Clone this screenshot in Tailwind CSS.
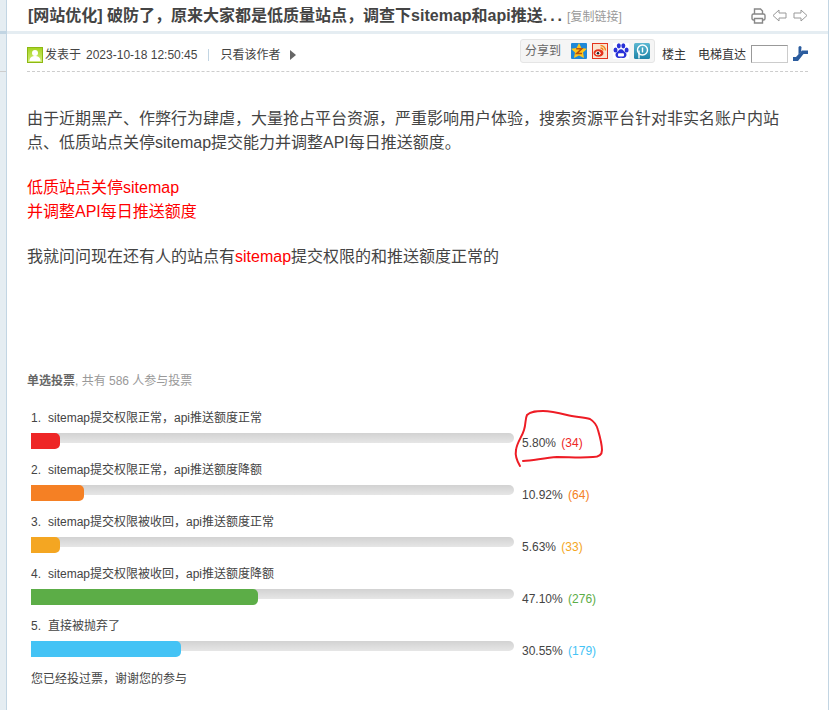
<!DOCTYPE html>
<html lang="zh">
<head>
<meta charset="UTF-8">
<title>帖子</title>
<script src="https://cdn.jsdelivr.net/npm/@tailwindcss/browser@4"></script>
</head>
<body class="bg-white font-['Liberation_Sans','Noto_Sans_CJK_SC',sans-serif] text-[#444] text-xs">
<div class="relative flex w-[832px] h-[710px] overflow-hidden">
  <!-- left strip, keeps the header band and dashed rule running through it -->
  <div class="w-[7px] shrink-0 bg-[#E5EDF2] border-r border-[#C2D5E3]">
    <div class="mt-[31px] h-[3px] bg-[#C2D5E3]"></div>
    <div class="mt-[37px] border-t border-dashed border-[#CDCDCD]"></div>
  </div>

  <main class="w-[822px] shrink-0 border-r border-[#C2D5E3]">
    <!-- title row -->
    <div class="flex items-center h-[31px] pl-[21px] pr-[20px] border-b-[3px] border-[#E5EDF2] box-content">
      <h1 class="text-base font-bold text-[#444] whitespace-nowrap">[网站优化] 破防了，原来大家都是低质量站点，调查下sitemap和api推送<span class="tracking-[3px]">...</span></h1>
      <span class="ml-[2px] mt-[3px] text-xs text-[#999] whitespace-nowrap">[复制链接]</span>
      <div class="ml-auto flex items-center gap-[6px]">
        <svg width="15" height="16" viewBox="0 0 15 16" fill="none" stroke="#888" stroke-width="1.4"><path d="M3.500 6V1h6l2 2v3"/><rect x="1" y="6" width="13" height="6" rx="1.500"/><path d="M3.500 10.500h8V15h-8z" fill="#fff"/></svg>
        <svg width="15" height="13" viewBox="0 0 15 13" fill="#fff" stroke="#999"><path d="M7 1 1 6.500 7 12V9h7V4H7z"/></svg>
        <svg width="15" height="13" viewBox="0 0 15 13" fill="#fff" stroke="#999"><path d="M8 1l6 5.500L8 12V9H1V4h7z"/></svg>
      </div>
    </div>

    <!-- author bar -->
    <div class="flex items-center h-[37px] ml-[20px] mr-[20px] border-b border-dashed border-[#CDCDCD] box-content">
      <svg width="16" height="16" viewBox="0 0 16 16" class="mt-[5px]">
        <defs><linearGradient id="avatarBg" x1="0" y1="0" x2="0" y2="1"><stop offset="0" stop-color="#A4D31E"/><stop offset="1" stop-color="#D4EE7C"/></linearGradient></defs>
        <rect x=".5" y=".5" width="15" height="15" fill="url(#avatarBg)" stroke="#8DB814"/><circle cx="8" cy="6" r="3" fill="#fff"/><path d="M2.500 14c0-4 3-5 5.500-5s5.500 1 5.500 5z" fill="#fff"/>
      </svg>
      <span class="ml-[2px] mt-[5px]">发表于</span>
      <span class="ml-[5px] mt-[5px] text-[#444]">2023-10-18 12:50:45</span>
      <span class="ml-[11px] mt-[5px] h-[12px] border-l border-[#C2D5E3]"></span>
      <span class="ml-[11px] mt-[5px]">只看该作者</span>
      <span class="ml-[10px] mt-[5px] w-0 h-0 border-y-[5px] border-y-transparent border-l-[6px] border-l-[#666]"></span>

      <div class="ml-auto flex items-center h-[24px] w-[135px] pl-[4px] bg-[#F5F5F5] border border-[#E5E5E5] rounded-[3px] -mt-[4px]">
        <span class="w-[46px] text-[#666]">分享到</span>
        <div class="flex gap-[5px]">
          <svg width="16" height="16" viewBox="0 0 16 16"><rect width="16" height="16" rx="1" fill="#1E88D8"/><path d="M8 0l2.400 5 5.600.7-4 3.900 1 5.400L8 12.400 3 15l1-5.400-4-3.900L5.600 5z" fill="#FFC61A"/><path d="M5.200 5.800h5.600L5.600 10.600h5.400" fill="none" stroke="#B5520C" stroke-width="1.500"/></svg>
          <svg width="16" height="16" viewBox="0 0 16 16"><rect x=".5" y=".5" width="15" height="15" fill="#FBE3CF" stroke="#E4331C"/><ellipse cx="6.500" cy="10" rx="5" ry="3.800" fill="#E4331C"/><ellipse cx="6" cy="10.300" rx="2.600" ry="2" fill="#fff"/><circle cx="6" cy="10.300" r="1.300" fill="#222"/><path d="M8.500 2.500a5 5 0 0 1 5 5M8.500 5a2.500 2.500 0 0 1 2.500 2.500" fill="none" stroke="#F08A1D" stroke-width="1.400"/></svg>
          <svg width="16" height="16" viewBox="0 0 16 16"><rect width="16" height="16" fill="#fff"/><g fill="#2A32D8"><ellipse cx="2.500" cy="7" rx="2" ry="2.500"/><ellipse cx="5.800" cy="2.800" rx="2" ry="2.600"/><ellipse cx="10.300" cy="2.800" rx="2" ry="2.600"/><ellipse cx="13.600" cy="7" rx="2" ry="2.500"/><path d="M8 6.200c2.200 0 2.800 2 4.300 3.100 2.200 1.700 1.200 5.700-1.700 5.700-1 0-1.600-.3-2.600-.3s-1.600.3-2.600.3c-2.900 0-3.900-4-1.700-5.700C5.200 8.200 5.800 6.200 8 6.200z"/></g><rect x="5" y="10.300" width="6" height="3.200" rx="1" fill="#fff"/></svg>
          <svg width="16" height="16" viewBox="0 0 16 16"><defs><linearGradient id="pinBg" x1="0" y1="0" x2="0" y2="1"><stop offset="0" stop-color="#5CB8D2"/><stop offset="1" stop-color="#1E84A8"/></linearGradient></defs><rect width="16" height="16" rx="1.500" fill="url(#pinBg)"/><circle cx="8.500" cy="7" r="5" fill="none" stroke="#fff" stroke-width="1.400"/><path d="M5 15.500V7.500M8.500 4.500v5" stroke="#fff" stroke-width="1.400" fill="none"/></svg>
        </div>
      </div>
      <span class="ml-[7px] mt-[5px] text-[#333]">楼主</span>
      <span class="ml-[12px] mt-[5px] text-[#333]">电梯直达</span>
      <span class="ml-[5px] mt-[3px] w-[37px] h-[18px] bg-white border border-[#CCC] border-t-[#999] border-l-[#999]"></span>
      <svg width="15" height="15" viewBox="0 0 15 15" class="ml-[5px] mt-[1px]" fill="#2B5C9E"><path d="M0 11h3l6-6.500h6V8h-4.500L5 15H0z"/><path d="M5.500 1.500a1.500 1.500 0 0 1 3 0L8 6 5.500 8.500z"/></svg>
    </div>

    <!-- post body -->
    <div class="ml-[20px] pt-[35px] w-[760px] text-base leading-[24px] text-[#444]">
      <p>由于近期黑产、作弊行为肆虐，大量抢占平台资源，严重影响用户体验，搜索资源平台针对非实名账户内站点、低质站点关停sitemap提交能力并调整API每日推送额度。</p>
      <p class="mt-[21px] text-[#F00]">低质站点关停sitemap<br>并调整API每日推送额度</p>
      <p class="mt-[21px]">我就问问现在还有人的站点有<span class="text-[#F00]">sitemap</span>提交权限的和推送额度正常的</p>
    </div>

    <!-- poll -->
    <div class="ml-[20px] mt-[103px]">
      <p class="h-[18px] leading-[18px] text-[#999]"><strong class="text-[#666]">单选投票</strong>, 共有 586 人参与投票</p>
      <div class="mt-[20px] ml-[4px] flex flex-col gap-[16px]">

        <div class="h-[36px]">
          <p class="h-[16px] leading-[16px]"><span class="inline-block w-[17px]">1.</span>sitemap提交权限正常，api推送额度正常</p>
          <div class="flex mt-[7px]">
            <div class="relative w-[483px] h-[10px] bg-linear-to-b from-[#D2D2D2] to-[#E6E6E6] rounded-r-[5px]">
              <div class="absolute left-0 top-0 h-[16px] w-[29px] bg-[#EE2626] rounded-r-[5px]"></div>
            </div>
            <p class="ml-[8px] mt-[2px] whitespace-nowrap leading-[16px]">5.80% <span class="ml-[2px] text-[#EE2626]">(34)</span></p>
          </div>
        </div>

        <div class="h-[36px]">
          <p class="h-[16px] leading-[16px]"><span class="inline-block w-[17px]">2.</span>sitemap提交权限正常，api推送额度降额</p>
          <div class="flex mt-[7px]">
            <div class="relative w-[483px] h-[10px] bg-linear-to-b from-[#D2D2D2] to-[#E6E6E6] rounded-r-[5px]">
              <div class="absolute left-0 top-0 h-[16px] w-[53px] bg-[#F58024] rounded-r-[5px]"></div>
            </div>
            <p class="ml-[8px] mt-[2px] whitespace-nowrap leading-[16px]">10.92% <span class="ml-[2px] text-[#F58024]">(64)</span></p>
          </div>
        </div>

        <div class="h-[36px]">
          <p class="h-[16px] leading-[16px]"><span class="inline-block w-[17px]">3.</span>sitemap提交权限被收回，api推送额度正常</p>
          <div class="flex mt-[7px]">
            <div class="relative w-[483px] h-[10px] bg-linear-to-b from-[#D2D2D2] to-[#E6E6E6] rounded-r-[5px]">
              <div class="absolute left-0 top-0 h-[16px] w-[29px] bg-[#F4A622] rounded-r-[5px]"></div>
            </div>
            <p class="ml-[8px] mt-[2px] whitespace-nowrap leading-[16px]">5.63% <span class="ml-[2px] text-[#F4A622]">(33)</span></p>
          </div>
        </div>

        <div class="h-[36px]">
          <p class="h-[16px] leading-[16px]"><span class="inline-block w-[17px]">4.</span>sitemap提交权限被收回，api推送额度降额</p>
          <div class="flex mt-[7px]">
            <div class="relative w-[483px] h-[10px] bg-linear-to-b from-[#D2D2D2] to-[#E6E6E6] rounded-r-[5px]">
              <div class="absolute left-0 top-0 h-[16px] w-[227px] bg-[#5CAD47] rounded-r-[5px]"></div>
            </div>
            <p class="ml-[8px] mt-[2px] whitespace-nowrap leading-[16px]">47.10% <span class="ml-[2px] text-[#5CAD47]">(276)</span></p>
          </div>
        </div>

        <div class="h-[36px]">
          <p class="h-[16px] leading-[16px]"><span class="inline-block w-[17px]">5.</span>直接被抛弃了</p>
          <div class="flex mt-[7px]">
            <div class="relative w-[483px] h-[10px] bg-linear-to-b from-[#D2D2D2] to-[#E6E6E6] rounded-r-[5px]">
              <div class="absolute left-0 top-0 h-[16px] w-[150px] bg-[#44C3F5] rounded-r-[5px]"></div>
            </div>
            <p class="ml-[8px] mt-[2px] whitespace-nowrap leading-[16px]">30.55% <span class="ml-[2px] text-[#44C3F5]">(179)</span></p>
          </div>
        </div>
      </div>
      <p class="mt-[17px] ml-[4px] leading-[16px]">您已经投过票，谢谢您的参与</p>
    </div>
  </main>

  <!-- hand-drawn red annotation -->
  <svg class="absolute left-[510px] top-[405px]" width="100" height="65" viewBox="0 0 100 65" fill="none" stroke="#EE1C25" stroke-width="2" stroke-linecap="round" stroke-linejoin="round">
    <path d="M10 61C7 56 5 50 6 45C7 37 12 32 14 25C16 19 15 14 17 10C21 6 27 6 33 6C41 6 49 8 57 10C65 12 74 12 80 14C85 17 87 21 88 25C90 32 92 39 92 45C92 50 88 52 83 52C71 53 59 52 47 52C35 53 24 55 13 56"/>
  </svg>
</div>
</body>
</html>
